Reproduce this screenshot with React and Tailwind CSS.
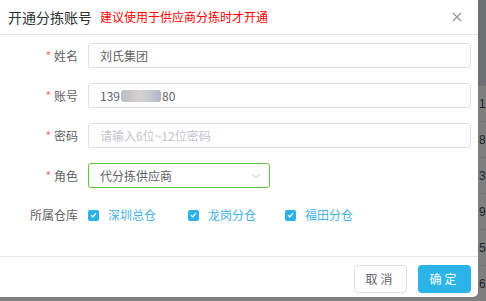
import React from "react";

const font = { fontFamily: '"Noto Sans CJK SC", "Noto Sans", sans-serif' };

function Label({ text, required }) {
  return (
    <div className="w-[88px] pr-[10px] flex items-center justify-end text-[12px] text-[#606266] shrink-0">
      {required && <span className="text-[#f56c6c] mr-[3px] text-[12px]">*</span>}
      <span>{text}</span>
    </div>
  );
}

function Check({ label, className }) {
  return (
    <div className={"flex items-center " + (className || "")}>
      <span className="w-[11px] h-[11px] rounded-[2px] bg-[#2db1e8] flex items-center justify-center">
        <svg width="7" height="6" viewBox="0 0 7 6" fill="none">
          <path d="M1 3.2 L2.8 4.8 L6 1.2" stroke="#fff" strokeWidth="1.2" />
        </svg>
      </span>
      <span className="ml-[9px] text-[12px] text-[#45b0e6]">{label}</span>
    </div>
  );
}

export default function App() {
  const nums = ["1", "8", "3", "9", "5", "6"];
  return (
    <div className="w-[486px] h-[301px] flex bg-[#7f7f7f] overflow-hidden" style={font}>
      <div className="w-[478px] h-[297px] bg-white rounded-br-[5px] flex flex-col shrink-0">
        <div className="h-[35px] border-b border-[#e4e7ed] flex items-center pl-[8px] pr-[16px]">
          <span className="text-[14px] text-[#303133]">开通分拣账号</span>
          <span className="ml-[8px] text-[12px] text-[#ff0000]">建议使用于供应商分拣时才开通</span>
          <span className="ml-auto">
            <svg width="10" height="10" viewBox="0 0 10 10">
              <path d="M1 1 L9 9 M9 1 L1 9" stroke="#909399" strokeWidth="1.1" />
            </svg>
          </span>
        </div>
        <div className="flex flex-col pt-[8px] pr-[7px] gap-[15px]">
          <div className="flex">
            <Label text="姓名" required />
            <div className="flex-1 h-[25px] border border-[#dcdfe6] rounded-[3px] flex items-center pl-[11px] text-[12px] text-[#606266]">
              刘氏集团
            </div>
          </div>
          <div className="flex">
            <Label text="账号" required />
            <div className="flex-1 h-[25px] border border-[#dcdfe6] rounded-[3px] flex items-center pl-[11px] text-[12px] text-[#606266]">
              <span>139</span>
              <span className="w-[40px] h-[12px] mx-[1px] bg-[linear-gradient(90deg,#b9bfca,#c9c6c4,#d6d3cf,#c4c8d0,#aab3c6)] rounded-[3px] blur-[0.6px]"></span>
              <span>80</span>
            </div>
          </div>
          <div className="flex">
            <Label text="密码" required />
            <div className="flex-1 h-[25px] border border-[#dcdfe6] rounded-[3px] flex items-center pl-[11px] text-[12px] text-[#c0c4cc]">
              请输入6位~12位密码
            </div>
          </div>
          <div className="flex">
            <Label text="角色" required />
            <div className="w-[182px] h-[25px] border border-[#67c23a] rounded-[3px] flex items-center pl-[11px] pr-[8px] text-[12px] text-[#606266]">
              <span>代分拣供应商</span>
              <span className="ml-auto">
                <svg width="10" height="6" viewBox="0 0 10 6" fill="none">
                  <path d="M1 1 L5 5 L9 1" stroke="#c0c4cc" strokeWidth="1" />
                </svg>
              </span>
            </div>
          </div>
          <div className="flex h-[20px] mt-[2px]">
            <Label text="所属仓库" />
            <div className="flex items-center">
              <Check label="深圳总仓" />
              <Check label="龙岗分仓" className="ml-[32px]" />
              <Check label="福田分仓" className="ml-[29px]" />
            </div>
          </div>
        </div>
        <div className="mt-auto border-t border-[#e4e7ed] h-[41px] flex items-start justify-end pt-[8px] pr-[7px] gap-[11px]">
          <button className="w-[53px] h-[28px] border border-[#dcdfe6] rounded-[4px] bg-white text-[12px] text-[#606266] tracking-[3px]">
            取消
          </button>
          <button className="w-[53px] h-[28px] rounded-[4px] bg-[#2cb3e8] text-[12px] text-white tracking-[3px]">
            确定
          </button>
        </div>
      </div>
      <div className="flex-1 flex flex-col">
        <div className="h-[85px] bg-[#6d6f72]"></div>
        {nums.map((n) => (
          <div key={n} className="h-[36px] border-t border-[#747474] flex items-center pl-[1px] text-[12px] text-[#1f1f1f]" style={{ fontFamily: '"Liberation Sans", sans-serif' }}>
            {n}
          </div>
        ))}
      </div>
    </div>
  );
}
